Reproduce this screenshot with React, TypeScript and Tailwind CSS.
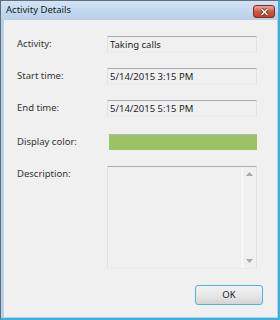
const font = { fontFamily: '"Noto Sans", "Open Sans", sans-serif' };

function Field({ children }: { children?: React.ReactNode }) {
  return (
    <div className="h-[17px] w-[150px] border border-t-[#abadb3] border-x-[#dfe3e8] border-b-[#e8ebef] bg-[#f0f0f0] pl-[2px] text-[9.5px] leading-[15px] text-[#1e1e1e]">
      {children}
    </div>
  );
}

function Row({ label, children }: { label: string; children: React.ReactNode }) {
  return (
    <div className="flex items-center">
      <div className="w-[90px] text-[9.5px] text-[#333]">{label}</div>
      {children}
    </div>
  );
}

export default function App() {
  return (
    <div className="w-[280px] h-[320px] flex flex-col bg-[#b8cfe8] border-t border-l border-[#646e7a] border-r-2 border-b-2 border-r-[#3ab0de] border-b-[#3ab0de]" style={font}>
      <div className="h-[19px] shrink-0 flex items-center justify-between pl-[5px] pr-[3px] bg-gradient-to-b from-[#d3e3f4] to-[#b7cfe9]">
        <span className="text-[9.5px] text-[#1a1a1a]">Activity Details</span>
        <div className="w-[22px] h-[13px] mt-[2px] rounded-[3px] border border-[#7b2d28] bg-gradient-to-b from-[#e9a99a] via-[#d5573f] to-[#c5402d] flex items-center justify-center">
          <svg width="9" height="8" viewBox="0 0 9 8">
            <path d="M1.5 1 L7.5 7 M7.5 1 L1.5 7" stroke="#5a1a14" strokeWidth="3" />
            <path d="M1.5 1 L7.5 7 M7.5 1 L1.5 7" stroke="#fff" strokeWidth="1.6" />
          </svg>
        </div>
      </div>
      <div className="flex-1 ml-[3px] mr-[1px] mb-[1px] border-l border-[#f4f8fc] bg-[#f0f0f0] pl-[12px] pt-[16px] flex flex-col">
        <div className="flex flex-col gap-[15px]">
          <Row label="Activity:">
            <Field>Taking calls</Field>
          </Row>
          <Row label="Start time:">
            <Field>5/14/2015 3:15 PM</Field>
          </Row>
          <Row label="End time:">
            <Field>5/14/2015 5:15 PM</Field>
          </Row>
        </div>
        <div className="mt-[17px]">
          <Row label="Display color:">
            <div className="ml-[2px] h-[16px] w-[148px] border-t border-[#b4b8bc] bg-[#9bc263]" />
          </Row>
        </div>
        <div className="mt-[16px] flex items-start">
          <div className="w-[90px] text-[9.5px] leading-[16px] text-[#333]">Description:</div>
          <div className="h-[103px] w-[150px] border border-t-[#abadb3] border-x-[#dfe3e8] border-b-[#e8ebef] flex justify-end">
            <div className="w-[14px] border-l border-[#fafafa] flex flex-col justify-between items-center py-[5px]">
              <svg width="7" height="4" viewBox="0 0 7 4">
                <path d="M3.5 0 L7 4 L0 4 Z" fill="#a8a8a8" />
              </svg>
              <svg width="7" height="4" viewBox="0 0 7 4">
                <path d="M0 0 L7 0 L3.5 4 Z" fill="#a8a8a8" />
              </svg>
            </div>
          </div>
        </div>
        <div className="mt-[16px] flex justify-end pr-[14px]">
          <button className="w-[68px] h-[20px] rounded-[3px] border border-[#4fb2e6] bg-gradient-to-b from-[#f2f2f2] via-[#e8e8e8] to-[#d4d4d4] text-[9.5px] text-[#1e1e1e] leading-none">
            OK
          </button>
        </div>
      </div>
    </div>
  );
}
